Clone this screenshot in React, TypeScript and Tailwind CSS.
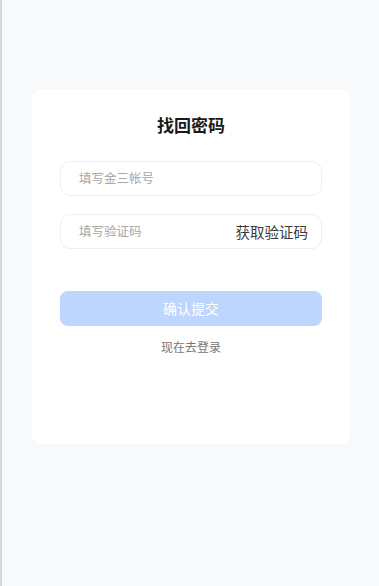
export default function App() {
  return (
    <div
      className="min-h-[586px] bg-[#f8f9fb] border-l-2 border-[#d6d7da] pt-[89px]"
      style={{ fontFamily: '"Noto Sans CJK SC", "Noto Sans", sans-serif' }}
    >
      <div className="ml-[30px] w-[318px] h-[355px] bg-white rounded-[10px] flex flex-col items-center pt-[22px]">
        <h1 className="text-[17px] leading-[28px] font-bold text-[#1a1a1a]">找回密码</h1>

        <div className="mt-[22px] w-[262px] h-[35px] rounded-[10px] border border-[#efefef] flex items-center px-[18px]">
          <span className="text-[12.5px] text-[#a8a8a8]">填写金三帐号</span>
        </div>

        <div className="mt-[18px] w-[262px] h-[35px] rounded-[10px] border border-[#efefef] flex items-center justify-between pl-[18px] pr-[13px]">
          <span className="text-[12.5px] text-[#a8a8a8]">填写验证码</span>
          <span className="text-[14.5px] text-[#3a3a3a]">获取验证码</span>
        </div>

        <button className="mt-[42px] w-[262px] h-[35px] rounded-[8px] bg-[#bcd6fd] text-white text-[14px]">
          确认提交
        </button>

        <p className="mt-[12px] text-[12px] text-[#777]">现在去登录</p>
      </div>
    </div>
  );
}
